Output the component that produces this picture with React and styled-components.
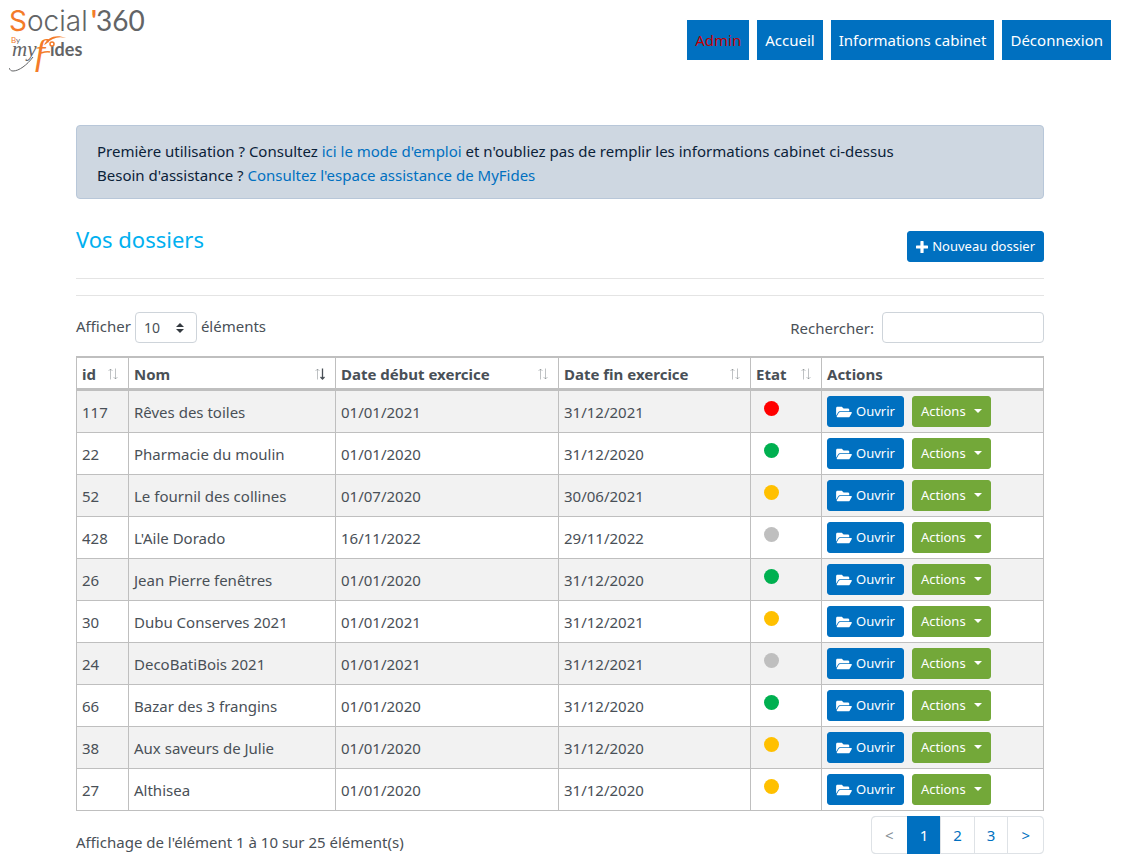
import React, { useState } from "react";
import styled, { createGlobalStyle } from "styled-components";

const COLORS = {
  primary: "#0070c0",
  success: "#73a839",
  title: "#00b0f0",
  text: "#495057",
  tableBorder: "#bfbfbf",
  inputBorder: "#ced4da",
};

const ETATS = {
  rouge: "#ff0000",
  vert: "#00b050",
  orange: "#ffc000",
  gris: "#bfbfbf",
};

const columns = [
  { key: "id", label: "id", width: 52 },
  { key: "nom", label: "Nom", width: 207 },
  { key: "debut", label: "Date début exercice", width: 223 },
  { key: "fin", label: "Date fin exercice", width: 192 },
  { key: "etat", label: "Etat", width: 71 },
];

const dossiers = [
  { id: 117, nom: "Rêves des toiles", debut: "01/01/2021", fin: "31/12/2021", etat: "rouge" },
  { id: 22, nom: "Pharmacie du moulin", debut: "01/01/2020", fin: "31/12/2020", etat: "vert" },
  { id: 52, nom: "Le fournil des collines", debut: "01/07/2020", fin: "30/06/2021", etat: "orange" },
  { id: 428, nom: "L'Aile Dorado", debut: "16/11/2022", fin: "29/11/2022", etat: "gris" },
  { id: 26, nom: "Jean Pierre fenêtres", debut: "01/01/2020", fin: "31/12/2020", etat: "vert" },
  { id: 30, nom: "Dubu Conserves 2021", debut: "01/01/2021", fin: "31/12/2021", etat: "orange" },
  { id: 24, nom: "DecoBatiBois 2021", debut: "01/01/2021", fin: "31/12/2021", etat: "gris" },
  { id: 66, nom: "Bazar des 3 frangins", debut: "01/01/2020", fin: "31/12/2020", etat: "vert" },
  { id: 38, nom: "Aux saveurs de Julie", debut: "01/01/2020", fin: "31/12/2020", etat: "orange" },
  { id: 27, nom: "Althisea", debut: "01/01/2020", fin: "31/12/2020", etat: "orange" },
];

const Logo = () => (
  <svg width="150" height="74" viewBox="0 0 150 74" role="img" aria-label="Social'360 By myFides">
    <g fontFamily="Lato, sans-serif" fill="#636466">
      <text x="0" y="31" fontFamily="Inter, sans-serif" fontSize="28" fontWeight="300">
        <tspan fill="#f47b29" fontWeight="400">S</tspan>ocial
      </text>
      <text x="82" y="31" fontSize="28" fontWeight="700" fill="#f47b29">
        '
      </text>
      <text x="87" y="31" fontSize="28">
        360
      </text>
      <text x="2" y="43" fontSize="8">
        <tspan fill="#f47b29">B</tspan>y
      </text>
      <text x="41" y="56" fontSize="18" fontWeight="700">
        ides
      </text>
    </g>
    <text x="3" y="56" fontFamily="Liberation Serif, serif" fontStyle="italic" fontSize="21" fill="#636466">
      my
    </text>
    <path d="M24 57c-6 8-14 14-20 14-2 0-3-1-4-3" fill="none" stroke="#636466" />
    <text x="26" y="64" fontFamily="Liberation Serif, serif" fontStyle="italic" fontSize="36" fill="#f47b29">
      f
    </text>
    <path d="M35 45c4-8 12-11 22-7-8-2-14 0-20 6z" fill="#f47b29" />
    <path d="M32 53q6-2 9-1" fill="none" stroke="#f47b29" strokeWidth="1.5" />
    <circle cx="43" cy="44" r="2" fill="#fff" stroke="#f47b29" strokeWidth="1.5" />
  </svg>
);

const SortIcon = ({ sorted }) => (
  <svg width="12" height="12" viewBox="0 0 12 12" fill="none" stroke={COLORS.text} aria-hidden="true">
    <path d="M3.5 11.5V1M1.5 3L3.5 1L5.500 3" opacity="0.35" />
    <path
      d="M8.5 0.5V11M6.5 9L8.5 11L10.5 9"
      opacity={sorted ? 1 : 0.35}
      strokeWidth={sorted ? 1.3 : 1}
    />
  </svg>
);

const PlusIcon = () => (
  <svg width="12" height="12" viewBox="0 0 12 12" fill="#fff" aria-hidden="true">
    <path d="M5 0h2q.6 0 .6.6v3.8h3.8q.6 0 .6.6v2q0 .6-.6.6H7.6v3.8q0 .6-.6.6H5q-.6 0-.6-.6V7.6H.6Q0 7.6 0 7V5q0-.6.6-.6h3.8V.6Q4.400 0 5 0z" />
  </svg>
);

const FolderIcon = () => (
  <svg width="16" height="14" viewBox="0 0 576 512" fill="#fff" aria-hidden="true">
    <path d="M572.694 292.093L500.270 416.248A63.997 63.997 0 0 1 444.989 448H45.025c-18.523 0-30.064-20.093-20.731-36.093l72.424-124.155A64 64 0 0 1 152 256h399.964c18.523 0 30.064 20.093 20.730 36.093zM152 224h328v-48c0-26.510-21.490-48-48-48H272l-64-64H48C21.490 64 0 85.490 0 112v278.046l69.077-118.418C86.214 242.250 117.989 224 152 224z" />
  </svg>
);

const App = () => {
  const [search, setSearch] = useState("");
  const [length, setLength] = useState("10");

  return (
    <>
      <GlobalStyle />
      <Header>
        <LogoLink href="#">
          <Logo />
        </LogoLink>
        <Nav>
          <NavLink href="#" $admin>
            Admin
          </NavLink>
          <NavLink href="#">Accueil</NavLink>
          <NavLink href="#">Informations cabinet</NavLink>
          <NavLink href="#">Déconnexion</NavLink>
        </Nav>
      </Header>
      <Main>
        <Alert>
          <p>
            Première utilisation ? Consultez <a href="#">ici le mode d'emploi</a> et n'oubliez pas de
            remplir les informations cabinet ci-dessus
          </p>
          <p>
            Besoin d'assistance ? <a href="#">Consultez l'espace assistance de MyFides</a>
          </p>
        </Alert>
        <TitleRow>
          <Title>Vos dossiers</Title>
          <Button>
            <PlusIcon />
            Nouveau dossier
          </Button>
        </TitleRow>
        <Separator />
        <Separator />
        <Filters>
          <LengthLabel>
            Afficher
            <Select value={length} onChange={(e) => setLength(e.target.value)}>
              <option>10</option>
              <option>25</option>
              <option>50</option>
            </Select>
            éléments
          </LengthLabel>
          <SearchLabel>
            Rechercher:
            <SearchInput type="search" value={search} onChange={(e) => setSearch(e.target.value)} />
          </SearchLabel>
        </Filters>
        <Table>
          <colgroup>
            {columns.map((column) => (
              <col key={column.key} width={column.width} />
            ))}
            <col />
          </colgroup>
          <thead>
            <tr>
              {columns.map((column) => (
                <th key={column.key}>
                  <SortButton>
                    {column.label}
                    <SortIcon sorted={column.key === "nom"} />
                  </SortButton>
                </th>
              ))}
              <th>Actions</th>
            </tr>
          </thead>
          <tbody>
            {dossiers.map((dossier) => (
              <tr key={dossier.id}>
                <td>{dossier.id}</td>
                <td>{dossier.nom}</td>
                <td>{dossier.debut}</td>
                <td>{dossier.fin}</td>
                <td>
                  <Dot $color={ETATS[dossier.etat]} />
                </td>
                <td>
                  <RowActions>
                    <Button>
                      <FolderIcon />
                      Ouvrir
                    </Button>
                    <Button $color={COLORS.success}>
                      Actions
                      <Caret />
                    </Button>
                  </RowActions>
                </td>
              </tr>
            ))}
          </tbody>
        </Table>
        <Footer>
          <Info>Affichage de l'élément 1 à 10 sur 25 élément(s)</Info>
          <Pagination>
            <PageButton disabled>&lt;</PageButton>
            <PageButton $active>1</PageButton>
            <PageButton>2</PageButton>
            <PageButton>3</PageButton>
            <PageButton>&gt;</PageButton>
          </Pagination>
        </Footer>
      </Main>
    </>
  );
};

const GlobalStyle = createGlobalStyle`
  * {
    box-sizing: border-box;
  }

  body {
    margin: 0;
    background-color: #fff;
    color: ${COLORS.text};
    font-family: "Segoe UI", "Noto Sans", sans-serif;
    font-size: 15px;
    line-height: 24px;
  }

  button,
  input,
  select {
    font-family: inherit;
  }

  a {
    color: ${COLORS.primary};
    text-decoration: none;
  }

  p {
    margin: 0;
  }
`;

const Header = styled.header`
  display: flex;
  justify-content: space-between;
  align-items: flex-start;
  padding: 0 14px 0 9px;
`;

const LogoLink = styled.a`
  display: flex;
`;

const Nav = styled.nav`
  display: flex;
  gap: 8px;
  padding-top: 20px;
`;

const NavLink = styled.a`
  padding: 8px;
  background-color: ${COLORS.primary};
  color: ${(props) => (props.$admin ? "#c00000" : "#fff")};
`;

const Main = styled.main`
  padding: 51px 81px 12px 76px;
`;

const Alert = styled.div`
  padding: 13px 20px 11px;
  border: 1px solid #b8c7d9;
  border-radius: 4px;
  background-color: #ced7e1;
  color: #0b2239;
`;

const TitleRow = styled.div`
  display: flex;
  justify-content: space-between;
  align-items: flex-end;
  margin-top: 24px;
  padding-bottom: 16px;
`;

const Title = styled.h1`
  margin: 0;
  padding-bottom: 6px;
  color: ${COLORS.title};
  font-size: 22px;
  font-weight: 400;
  line-height: 33px;
`;

const Button = styled.button`
  display: inline-flex;
  align-items: center;
  gap: 4px;
  padding: 4px 8px;
  border: 1px solid ${(props) => props.$color || COLORS.primary};
  border-radius: 3px;
  background-color: ${(props) => props.$color || COLORS.primary};
  color: #fff;
  font-size: 13px;
  line-height: 21px;
`;

const Separator = styled.hr`
  margin: 0 0 16px;
  border: 0;
  border-top: 1px solid #e4e4e4;
`;

const Filters = styled.div`
  display: flex;
  justify-content: space-between;
  margin-bottom: 13px;
`;

const LengthLabel = styled.label`
  display: flex;
  gap: 4px;
  line-height: 28px;
`;

const Select = styled.select`
  width: 62px;
  height: 31px;
  padding: 0 8px;
  border: 1px solid ${COLORS.inputBorder};
  border-radius: 4px;
  appearance: none;
  background: #fff
    url("data:image/svg+xml,%3csvg xmlns='http://www.w3.org/2000/svg' viewBox='0 0 4 5'%3e%3cpath fill='%23343a40' d='M2 0L0 2h4zm0 5L0 3h4z'/%3e%3c/svg%3e")
    no-repeat right 12px center / 8px 10px;
  color: ${COLORS.text};
  font-size: 14px;
`;

const SearchLabel = styled.label`
  display: flex;
  align-items: center;
  gap: 8px;
`;

const SearchInput = styled.input`
  width: 162px;
  height: 31px;
  padding: 4px 8px;
  border: 1px solid ${COLORS.inputBorder};
  border-radius: 4px;
  font-size: 14px;
`;

const Table = styled.table`
  width: 100%;
  table-layout: fixed;
  border-collapse: collapse;

  th,
  td {
    padding: 5px;
    border: 1px solid ${COLORS.tableBorder};
    text-align: left;
  }

  th {
    padding: 4px 5px 2px;
    border-top-width: 2px;
    border-bottom-width: 3px;
    font-weight: 700;
  }

  td {
    height: 41px;
    vertical-align: middle;
  }

  tbody tr:nth-child(odd) {
    background-color: #f2f2f2;
  }
`;

const SortButton = styled.button`
  display: flex;
  justify-content: space-between;
  align-items: center;
  width: 100%;
  padding: 0 4px 0 0;
  border: 0;
  background: none;
  color: inherit;
  font-size: 15px;
  font-weight: 700;
  line-height: 24px;
`;

const Dot = styled.span`
  display: block;
  width: 15px;
  height: 15px;
  margin: 0 0 6px 8px;
  border-radius: 50%;
  background-color: ${(props) => props.$color};
`;

const RowActions = styled.div`
  display: flex;
  gap: 8px;
`;

const Caret = styled.span`
  margin: 0 0 2px 4px;
  border-top: 4px solid #fff;
  border-right: 4px solid transparent;
  border-left: 4px solid transparent;
`;

const Footer = styled.div`
  display: flex;
  justify-content: space-between;
  align-items: flex-start;
  margin-top: 5px;
`;

const Info = styled.p`
  padding-top: 14px;
`;

const Pagination = styled.nav`
  display: flex;
  border: 1px solid #dee2e6;
  border-radius: 4px;
`;

const PageButton = styled.button`
  height: 38px;
  margin: -1px 0;
  padding: 0 12px;
  border: 1px solid ${(props) => (props.$active ? COLORS.primary : "#dee2e6")};
  border-width: 1px 0 1px 1px;
  background-color: ${(props) => (props.$active ? COLORS.primary : "transparent")};
  color: ${(props) => (props.$active ? "#fff" : COLORS.primary)};
  font-size: 15px;

  &:first-child {
    padding: 0 13px;
    border-left: 0;
    border-radius: 4px 0 0 4px;
  }

  &:last-child {
    padding: 0 13px;
    border-radius: 0 4px 4px 0;
  }

  &:disabled {
    color: #868e96;
  }
`;

export default App;
